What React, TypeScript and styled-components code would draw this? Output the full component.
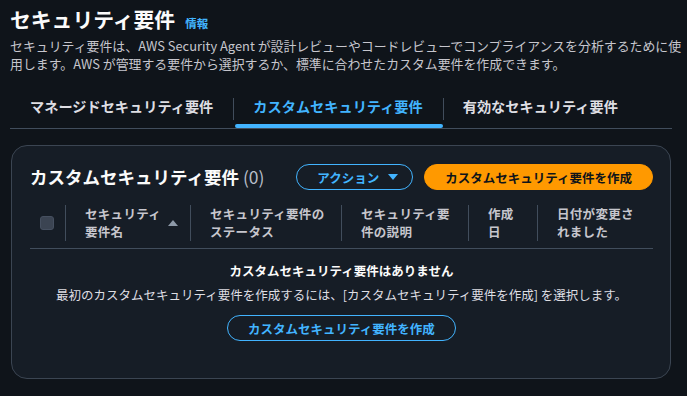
import styled, { createGlobalStyle } from 'styled-components';

const GlobalStyle = createGlobalStyle`
  html, body {
    margin: 0;
    padding: 0;
    background: #0f141a;
  }
  body {
    font-family: "Noto Sans CJK JP", "Noto Sans", sans-serif;
    color: #dedee3;
    -webkit-font-smoothing: antialiased;
  }
`;

const Page = styled.div`
  width: 687px;
  height: 396px;
  box-sizing: border-box;
  padding: 5px 15px 0 10px;
  overflow: hidden;
`;

const TitleRow = styled.div`
  display: flex;
  align-items: baseline;
  gap: 10px;
`;

const Title = styled.h1`
  margin: 0;
  font-size: 20.8px;
  line-height: 28px;
  font-weight: 700;
  color: #fbfbfb;
`;

const InfoLink = styled.a`
  font-size: 11.5px;
  font-weight: 700;
  color: #42b4ff;
`;

const Description = styled.p`
  margin: 4px 0 0;
  width: 680px;
  font-size: 12.9px;
  line-height: 18px;
  color: #c6c6cd;
`;

const TabList = styled.div`
  display: flex;
  margin-top: 15px;
  border-bottom: 1px solid #414d5c;
`;

const Tab = styled.div<{ $active?: boolean; $sep?: boolean }>`
  position: relative;
  display: flex;
  align-items: center;
  height: 40px;
  box-sizing: border-box;
  padding: 0 20px 4px 20px;
  font-size: 14.2px;
  font-weight: 700;
  color: ${(p) => (p.$active ? '#42b4ff' : '#dedee3')};

  &::before {
    content: '';
    display: ${(p) => (p.$sep ? 'block' : 'none')};
    position: absolute;
    left: 0;
    top: 10px;
    height: 22px;
    width: 1px;
    background: #414d5c;
  }

  &::after {
    content: '';
    display: ${(p) => (p.$active ? 'block' : 'none')};
    position: absolute;
    left: 2px;
    right: 0;
    bottom: 0;
    height: 4px;
    border-radius: 2px;
    background: #42b4ff;
  }
`;

const Container = styled.div`
  margin: 16px 1px 0;
  padding: 18px 17px 37px 18px;
  background: #161d26;
  border: 1px solid #3b4552;
  border-radius: 16px;
`;

const HeaderRow = styled.div`
  display: flex;
  align-items: center;
  justify-content: space-between;
`;

const HeaderTitle = styled.h2`
  margin: 0;
  font-size: 17.5px;
  line-height: 24px;
  font-weight: 700;
  color: #fbfbfb;
`;

const Count = styled.span`
  font-weight: 400;
  color: #b6bec9;
`;

const Actions = styled.div`
  display: flex;
  gap: 11px;
`;

const Button = styled.button<{ $primary?: boolean; $menu?: boolean }>`
  display: flex;
  align-items: center;
  gap: 9px;
  height: 26px;
  box-sizing: border-box;
  padding: 0 ${(p) => (p.$menu ? '14px' : '20px')} 0 20px;
  border-radius: 13px;
  border: 1.5px solid ${(p) => (p.$primary ? '#ff9900' : '#42b4ff')};
  background: ${(p) => (p.$primary ? '#ff9900' : 'transparent')};
  color: ${(p) => (p.$primary ? '#0f141a' : '#42b4ff')};
  font-family: inherit;
  font-size: 12.5px;
  font-weight: 700;
  cursor: pointer;
`;

const Table = styled.div`
  margin-top: 9px;
`;

const HeadRow = styled.div`
  display: grid;
  grid-template-columns: 35px 125px 151px 127px 69px 1fr;
  align-items: center;
  padding: 6px 0 7px;
  border-bottom: 1px solid #414d5c;
`;

const CheckCell = styled.div`
  display: flex;
  align-items: center;
  padding-left: 10px;
  height: 36px;
`;

const Checkbox = styled.span`
  width: 14px;
  height: 14px;
  box-sizing: border-box;
  border-radius: 3px;
  background: #3b4452;
  border: 1px solid #465060;
`;

const HeadCell = styled.div<{ $sortable?: boolean }>`
  display: flex;
  align-items: center;
  justify-content: space-between;
  height: 36px;
  padding: 0 ${(p) => (p.$sortable ? '12px' : '10px')} 0 19px;
  border-left: 1px solid #414d5c;
  font-size: 12.5px;
  line-height: 18px;
  font-weight: 700;
  color: #c6c6cd;
  letter-spacing: 0.3px;
`;

const Empty = styled.div`
  display: flex;
  flex-direction: column;
  align-items: center;
  padding-top: 13px;
`;

const EmptyTitle = styled.div`
  font-size: 12.5px;
  line-height: 18px;
  font-weight: 700;
  color: #fbfbfb;
`;

const EmptyText = styled.div`
  margin-top: 6px;
  font-size: 12.5px;
  line-height: 18px;
  color: #dedee3;
`;

const EmptyButton = styled(Button)`
  margin-top: 11px;
`;

const Caret = ({ up }: { up?: boolean }) => (
  <svg width="10" height="8" viewBox="0 0 10 8">
    {up ? (
      <polygon points="5,1 10,7 0,7" fill="#8d99a8" />
    ) : (
      <polygon points="0,1 10,1 5,7" fill="#42b4ff" />
    )}
  </svg>
);

const columns = [
  { label: ['セキュリティ', '要件名'], sortable: true },
  { label: ['セキュリティ要件の', 'ステータス'] },
  { label: ['セキュリティ要', '件の説明'] },
  { label: ['作成', '日'] },
  { label: ['日付が変更さ', 'れました'] },
];

const App = () => {
  return (
    <>
      <GlobalStyle />
      <Page>
        <TitleRow>
          <Title>セキュリティ要件</Title>
          <InfoLink>情報</InfoLink>
        </TitleRow>
        <Description>
          セキュリティ要件は、AWS Security Agent
          が設計レビューやコードレビューでコンプライアンスを分析するために使
          <br />
          用します。AWS
          が管理する要件から選択するか、標準に合わせたカスタム要件を作成できます。
        </Description>

        <TabList>
          <Tab>マネージドセキュリティ要件</Tab>
          <Tab $active $sep>
            カスタムセキュリティ要件
          </Tab>
          <Tab $sep>有効なセキュリティ要件</Tab>
        </TabList>

        <Container>
          <HeaderRow>
            <HeaderTitle>
              カスタムセキュリティ要件 <Count>(0)</Count>
            </HeaderTitle>
            <Actions>
              <Button $menu>
                アクション <Caret />
              </Button>
              <Button $primary>カスタムセキュリティ要件を作成</Button>
            </Actions>
          </HeaderRow>

          <Table>
            <HeadRow>
              <CheckCell>
                <Checkbox />
              </CheckCell>
              {columns.map((c) => (
                <HeadCell key={c.label.join('')} $sortable={c.sortable}>
                  <span>
                    {c.label[0]}
                    <br />
                    {c.label[1]}
                  </span>
                  {c.sortable && <Caret up />}
                </HeadCell>
              ))}
            </HeadRow>
          </Table>

          <Empty>
            <EmptyTitle>カスタムセキュリティ要件はありません</EmptyTitle>
            <EmptyText>
              最初のカスタムセキュリティ要件を作成するには、[カスタムセキュリティ要件を作成]
              を選択します。
            </EmptyText>
            <EmptyButton>カスタムセキュリティ要件を作成</EmptyButton>
          </Empty>
        </Container>
      </Page>
    </>
  );
};

export default App;
